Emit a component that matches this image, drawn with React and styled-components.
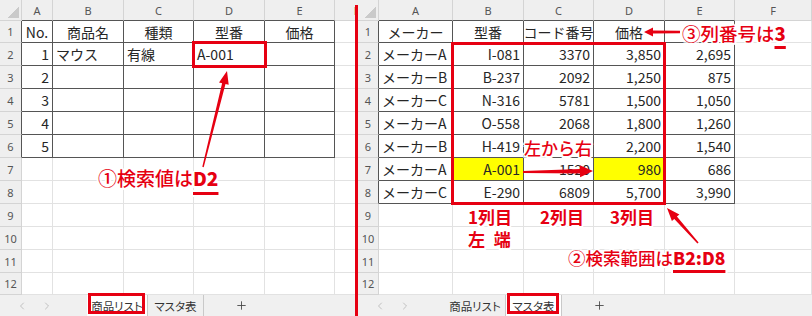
import React from "react";
import styled, { createGlobalStyle, css } from "styled-components";
import { ChevronLeft, ChevronRight, Plus } from "lucide-react";

const RED = "#e60012";
const FRAME = "#555";
const GRID = "#e2e2e2";
const HEAD_BG = "#efefef";
const HEAD_LINE = "#d4d4d4";

const GlobalStyle = createGlobalStyle`
  *, *::before, *::after { box-sizing: border-box; }
  html, body { margin: 0; padding: 0; background: #fff; }
  body {
    width: 812px;
    height: 316px;
    overflow: hidden;
    font-family: "Noto Sans CJK JP", "Noto Sans", sans-serif;
  }
`;

const Page = styled.div`
  display: flex;
  width: 812px;
  height: 316px;
`;

const Divider = styled.div`
  flex: 0 0 3px;
  background: linear-gradient(to bottom, ${HEAD_BG} 5px, ${RED} 5px);
`;

const SheetWrap = styled.div`
  position: relative;
  flex: 0 0 ${(p) => p.$width}px;
  display: flex;
  flex-direction: column;
  overflow: hidden;
`;

const Grid = styled.div`
  display: grid;
  grid-template-columns: ${(p) => p.$cols};
  grid-template-rows: ${(p) => p.$rows};
  flex: 0 0 auto;
`;

const Corner = styled.div`
  position: relative;
  background: ${HEAD_BG};
  border-right: 1px solid ${HEAD_LINE};
  border-bottom: 1px solid ${HEAD_LINE};

  &::after {
    content: "";
    position: absolute;
    right: 2px;
    bottom: 2px;
    width: 12px;
    height: 12px;
    background: linear-gradient(135deg, transparent 52%, #cacaca 52%);
  }
`;

const ColHead = styled.div`
  background: ${HEAD_BG};
  border-right: 1px solid ${HEAD_LINE};
  border-bottom: 1px solid ${(p) => (p.$framed ? FRAME : HEAD_LINE)};
  font-family: "Noto Sans", sans-serif;
  font-size: 11px;
  color: #555;
  display: flex;
  align-items: center;
  justify-content: center;
`;

const RowHead = styled.div`
  background: ${HEAD_BG};
  border-right: 1px solid ${(p) => (p.$framed ? FRAME : HEAD_LINE)};
  border-bottom: 1px solid ${HEAD_LINE};
  font-family: "Noto Sans", sans-serif;
  font-size: 11px;
  color: #555;
  display: flex;
  align-items: center;
  justify-content: center;
`;

const Cell = styled.div`
  position: relative;
  background: ${(p) => p.$fill || "#fff"};
  border-right: 1px solid ${(p) => (p.$framed ? FRAME : GRID)};
  border-bottom: 1px solid ${(p) => (p.$framed ? FRAME : GRID)};
  font-size: 14px;
  color: #262626;
  padding: 0 3px;
  display: flex;
  align-items: center;
  justify-content: ${(p) =>
    p.$align === "right" ? "flex-end" : p.$align === "center" ? "center" : "flex-start"};
  white-space: nowrap;
  overflow: hidden;

  ${(p) =>
    p.$marked &&
    css`
      overflow: visible;
      outline: 3px solid ${RED};
      outline-offset: -1px;
      z-index: 1;
    `}
`;

const TabBar = styled.div`
  flex: 0 0 21px;
  display: flex;
  align-items: stretch;
  background: #f0f0f0;
  font-size: 11.5px;
  font-feature-settings: "palt";
  color: #333;
  white-space: nowrap;
`;

const Nav = styled.div`
  flex: 0 0 87px;
  display: flex;
  align-items: center;
  gap: 13px;
  padding-left: 16px;
  color: #b4b4b4;
`;

const Tab = styled.div`
  position: relative;
  flex: 0 0 ${(p) => p.$w}px;
  display: flex;
  align-items: center;
  justify-content: center;
  background: ${(p) => (p.$active ? "#fff" : "transparent")};
  border-right: 1px solid #c9c9c9;

  ${(p) =>
    p.$marked &&
    css`
      &::after {
        content: "";
        position: absolute;
        inset: -2px 2px 2px 1px;
        border: 3px solid ${RED};
      }
    `}
`;

const AddTab = styled.div`
  display: flex;
  align-items: center;
  margin-left: 31px;
  color: #444;
`;

const Overlay = styled.svg`
  position: absolute;
  left: 0;
  top: 0;
  width: 100%;
  height: 100%;
  pointer-events: none;
  z-index: 3;
`;

const RangeBox = styled.div`
  position: absolute;
  left: ${(p) => p.$x}px;
  top: ${(p) => p.$y}px;
  width: ${(p) => p.$w}px;
  height: ${(p) => p.$h}px;
  border: 3px solid ${RED};
  pointer-events: none;
  z-index: 2;
`;

const Callout = styled.div`
  position: absolute;
  left: ${(p) => p.$x}px;
  top: ${(p) => p.$y}px;
  color: ${RED};
  font-size: ${(p) => p.$size || 18}px;
  font-weight: ${(p) => p.$weight || 500};
  line-height: ${(p) => p.$lh || "1"};
  white-space: nowrap;
  word-spacing: ${(p) => p.$gap || 0}px;
  z-index: 4;
  text-shadow: 2px 0 0 #fff, -2px 0 0 #fff, 0 2px 0 #fff, 0 -2px 0 #fff,
    1.5px 1.5px 0 #fff, -1.5px -1.5px 0 #fff, 1.5px -1.5px 0 #fff,
    -1.5px 1.5px 0 #fff;
`;

const Key = styled.span`
  font-weight: 900;
  text-decoration: underline;
  text-decoration-thickness: 2.5px;
  text-underline-offset: ${(p) => p.$offset || 6}px;
`;

// tapered arrow: thin tail, thick shaft, triangle head
const arrowPoints = (x1, y1, x2, y2, o = {}) => {
  const { tail = 1.5, shaft = 3.5, head = 13, spread = 11 } = o;
  const dx = x2 - x1;
  const dy = y2 - y1;
  const len = Math.hypot(dx, dy);
  const ux = dx / len;
  const uy = dy / len;
  const nx = -uy;
  const ny = ux;
  const bx = x2 - ux * head;
  const by = y2 - uy * head;
  const pts = [
    [x1 + (nx * tail) / 2, y1 + (ny * tail) / 2],
    [bx + (nx * shaft) / 2, by + (ny * shaft) / 2],
    [bx + (nx * spread) / 2, by + (ny * spread) / 2],
    [x2, y2],
    [bx - (nx * spread) / 2, by - (ny * spread) / 2],
    [bx - (nx * shaft) / 2, by - (ny * shaft) / 2],
    [x1 - (nx * tail) / 2, y1 - (ny * tail) / 2],
  ];
  return pts.map((p) => p.map((v) => v.toFixed(1)).join(",")).join(" ");
};

const Arrow = ({ from, to, ...opts }) => (
  <polygon points={arrowPoints(from[0], from[1], to[0], to[1], opts)} fill={RED} />
);

const LETTERS = ["A", "B", "C", "D", "E", "F"];
const ROW_HEIGHTS = [22, 23, 23, 23, 23, 23, 23, 23, 23, 23, 23, 22];

function Sheet({ width, cols, rows, framedRows, activeTab, children }) {
  const template = cols.map((c) => (typeof c === "number" ? `${c}px` : c)).join(" ");
  const rowTemplate = ["21px", ...ROW_HEIGHTS.map((h) => `${h}px`)].join(" ");
  const inFrame = (r, c) => r < framedRows && c < 5;

  return (
    <SheetWrap $width={width}>
      <Grid $cols={template} $rows={rowTemplate}>
        <Corner />
        {LETTERS.map((l, c) => (
          <ColHead key={l} $framed={c < 5}>
            {l}
          </ColHead>
        ))}
        {ROW_HEIGHTS.map((_, r) => (
          <React.Fragment key={r}>
            <RowHead $framed={r < framedRows}>{r + 1}</RowHead>
            {LETTERS.map((l, c) => {
              const cell = (rows[r] && rows[r][c]) || {};
              return (
                <Cell
                  key={l}
                  $framed={inFrame(r, c)}
                  $align={cell.a}
                  $fill={cell.fill}
                  $marked={cell.marked}
                >
                  {cell.t}
                </Cell>
              );
            })}
          </React.Fragment>
        ))}
      </Grid>
      <TabBar>
        <Nav>
          <ChevronLeft size={12} strokeWidth={1.6} />
          <ChevronRight size={12} strokeWidth={1.6} />
        </Nav>
        <Tab $w={61} $active={activeTab === 0} $marked={activeTab === 0}>
          商品リスト
        </Tab>
        <Tab $w={56} $active={activeTab === 1} $marked={activeTab === 1}>
          マスタ表
        </Tab>
        <AddTab>
          <Plus size={13} strokeWidth={1.6} />
        </AddTab>
      </TabBar>
      {children}
    </SheetWrap>
  );
}

const c = (t) => ({ t, a: "center" });
const r = (t, extra) => ({ t, a: "right", ...extra });
const l = (t) => ({ t });

const productRows = [
  [c("No."), c("商品名"), c("種類"), c("型番"), c("価格")],
  [r("1"), l("マウス"), l("有線"), { t: "A-001", marked: true }, {}],
  [r("2")],
  [r("3")],
  [r("4")],
  [r("5")],
];

const YELLOW = { fill: "#ffff00" };

const masterRows = [
  [c("メーカー"), c("型番"), c("コード番号"), c("価格"), {}],
  [l("メーカーA"), r("I-081"), r("3370"), r("3,850"), r("2,695")],
  [l("メーカーB"), r("B-237"), r("2092"), r("1,250"), r("875")],
  [l("メーカーC"), r("N-316"), r("5781"), r("1,500"), r("1,050")],
  [l("メーカーA"), r("O-558"), r("2068"), r("1,800"), r("1,260")],
  [l("メーカーB"), r("H-419"), {}, r("2,200"), r("1,540")],
  [l("メーカーA"), r("A-001", YELLOW), r("1520"), r("980", YELLOW), r("686")],
  [l("メーカーC"), r("E-290"), r("6809"), r("5,700"), r("3,990")],
];

export default function App() {
  return (
    <>
      <GlobalStyle />
      <Page>
        <Sheet
          width={355}
          cols={[22, 31, 71, 70, 71, 70, 44]}
          rows={productRows}
          framedRows={6}
          activeTab={0}
        >
          <Overlay>
            <Arrow from={[203, 167]} to={[227, 71]} tail={1.5} shaft={3.5} head={13} spread={10} />
          </Overlay>
          <Callout $x={98} $y={168} $size={19}>
            ①検索値は<Key $offset={6}>D2</Key>
          </Callout>
        </Sheet>

        <Divider />

        <Sheet
          width={454}
          cols={[21, 74, 71, 70, 71, 70, "1fr"]}
          rows={masterRows}
          framedRows={8}
          activeTab={1}
        >
          <RangeBox $x={93} $y={42} $w={215} $h={163} />
          <Callout $x={166} $y={139} $size={17} $weight={500}>
            左から右
          </Callout>
          <Overlay>
            <Arrow from={[322, 32]} to={[286, 32]} tail={2.5} shaft={3} head={9} spread={9} />
            <Arrow from={[165, 172]} to={[235, 171]} tail={2} shaft={4.5} head={13} spread={12} />
            <Arrow from={[340, 243]} to={[309, 208]} tail={1.5} shaft={3.5} head={13} spread={10} />
          </Overlay>
          <Callout $x={324} $y={24} $size={18.5}>
            ③列番号は<Key $offset={5}>3</Key>
          </Callout>
          <Callout $x={110} $y={206} $size={17} $weight={700} $lh="22px" $gap={5}>
            1列目
            <br />
            左 端
          </Callout>
          <Callout $x={182} $y={206} $size={17} $weight={700} $lh="22px">
            2列目
          </Callout>
          <Callout $x={252} $y={206} $size={17} $weight={700} $lh="22px">
            3列目
          </Callout>
          <Callout $x={210} $y={249} $size={17.5}>
            ②検索範囲は<Key $offset={5}>B2:D8</Key>
          </Callout>
        </Sheet>
      </Page>
    </>
  );
}
